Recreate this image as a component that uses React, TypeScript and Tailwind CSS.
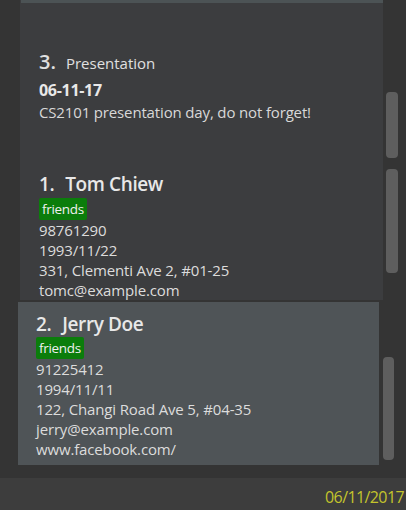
const FONT = "font-['Open_Sans','Noto_Sans',sans-serif]";

type Person = {
  index: number;
  name: string;
  tags: string[];
  phone: string;
  birthday: string;
  address: string;
  email: string;
  website?: string;
};

const people: Person[] = [
  {
    index: 1,
    name: "Tom Chiew",
    tags: ["friends"],
    phone: "98761290",
    birthday: "1993/11/22",
    address: "331, Clementi Ave 2, #01-25",
    email: "tomc@example.com",
  },
  {
    index: 2,
    name: "Jerry Doe",
    tags: ["friends"],
    phone: "91225412",
    birthday: "1994/11/11",
    address: "122, Changi Road Ave 5, #04-35",
    email: "jerry@example.com",
    website: "www.facebook.com/",
  },
];

function PersonBody({ p, tagClass }: { p: Person; tagClass: string }) {
  return (
    <>
      <div className="flex items-center h-[26px] text-[19px] font-semibold tracking-[-0.4px] text-[#e8e8e8]">
        <span>{p.index}.</span>
        <span className="ml-[11px]">{p.name}</span>
      </div>
      <div className={`flex gap-1 ${tagClass}`}>
        {p.tags.map((t) => (
          <span
            key={t}
            className="bg-[#0b7d0b] text-[#f0f0f0] text-[13.5px] tracking-[-0.3px] px-[3px] rounded-[2px]"
          >
            {t}
          </span>
        ))}
      </div>
      <div className="text-[15px] leading-[20px] tracking-[-0.15px] text-[#dcdcdc]">
        <div>{p.phone}</div>
        <div>{p.birthday}</div>
        <div>{p.address}</div>
        <div>{p.email}</div>
        {p.website && <div>{p.website}</div>}
      </div>
    </>
  );
}

export default function App() {
  const [tom, jerry] = people;
  return (
    <div className={`w-[406px] h-[510px] bg-[#343434] flex flex-col overflow-hidden ${FONT}`}>
      <div className="flex h-[478px]">
        {/* left gutter */}
        <div className="w-[20px] shrink-0" />

        {/* list column */}
        <div className="w-[363px] shrink-0 flex flex-col">
          <div className="h-[300px] bg-[#3c3d3f] flex flex-col">
            <div className="h-[3px] bg-[#4c5355] ml-[1px]" />

            {/* event card */}
            <div className="pl-[19px] pt-[44px] h-[160px]">
              <div className="flex items-baseline text-[#e0e0e0]">
                <span className="text-[20px] font-semibold">3.</span>
                <span className="ml-[10px] text-[15px]">Presentation</span>
              </div>
              <div className="text-[16px] font-bold tracking-[-0.3px] text-[#e8e8e8] mt-[1px]">06-11-17</div>
              <div className="text-[15px] tracking-[-0.15px] text-[#d8d8d8] leading-[20px]">
                CS2101 presentation day, do not forget!
              </div>
            </div>

            {/* person card */}
            <div className="pl-[19px] pt-[14px]">
              <PersonBody p={tom} tagClass="mt-[1px] leading-[22px]" />
            </div>
          </div>

          <div className="ml-[-2px] w-[361px] h-[163px] mt-[2px] bg-[#4f5457] pl-[18px] pt-[9px]">
            <PersonBody p={jerry} tagClass="leading-[22px]" />
          </div>
        </div>

        {/* scrollbars */}
        <div className="flex-1 flex flex-col">
          <div className="ml-[3px] mt-[92px] w-[12px] h-[66px] rounded-[4px] bg-[#5e5e5e]" />
          <div className="ml-[3px] mt-[11px] w-[12px] h-[104px] rounded-[4px] bg-[#5e5e5e]" />
          <div className="ml-0 mt-[84px] w-[11px] h-[103px] rounded-[4px] bg-[#5e5e5e]" />
        </div>
      </div>

      {/* status bar */}
      <div className="flex-1 bg-[#3d3d3d] flex items-center justify-end pr-[2px] pt-[6px]">
        <span className="text-[16px] tracking-[-0.6px] text-[#c4c42c]">06/11/2017</span>
      </div>
    </div>
  );
}
